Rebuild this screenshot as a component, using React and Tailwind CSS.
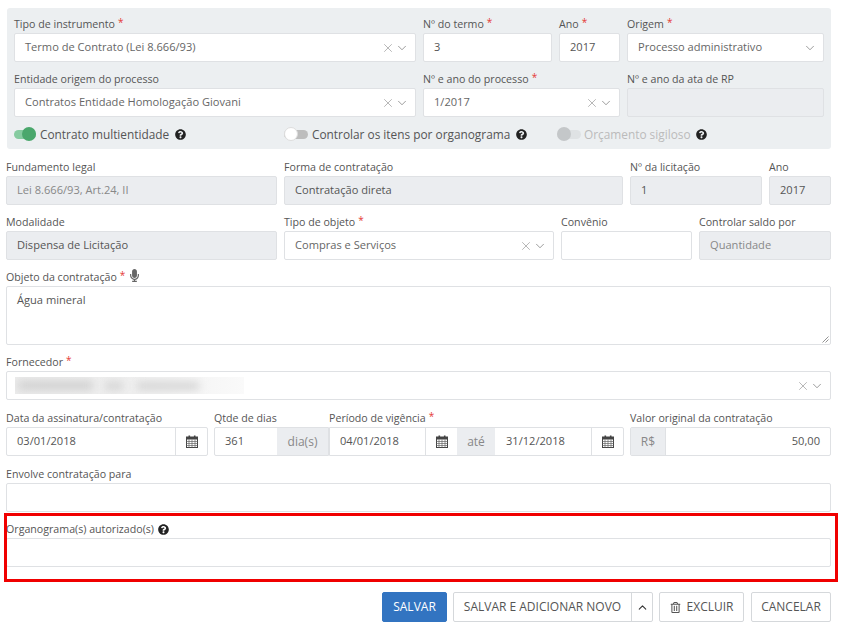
import React from 'react';
import { X, ChevronDown, ChevronUp } from 'lucide-react';
import { FaQuestionCircle, FaMicrophone, FaRegTrashAlt } from 'react-icons/fa';

const boxClass = 'h-[29px] border border-[#dfe1e4] rounded-[2px] flex items-center text-[11.1px] text-[#555]';

function Label({ text, required, children }) {
  return (
    <div className="h-[26px] pt-[10px] flex items-start text-[10.65px] leading-[15px] text-[#555] whitespace-nowrap">
      <span>{text}</span>
      {required && <span className="ml-[3px] text-[#e53935] text-[10px] leading-[11px]">*</span>}
      {children}
    </div>
  );
}

function Help({ className }) {
  return <FaQuestionCircle className={`text-[#222] ${className || ''}`} size={11} />;
}

function SelectIcons({ clear = true }) {
  return (
    <>
      {clear && <X size={14} strokeWidth={0.9} className="text-[#777]" />}
      <ChevronDown size={14} strokeWidth={1.1} className="text-[#666]" />
    </>
  );
}

function Select({ value, clear }) {
  return (
    <div className={`${boxClass} bg-white pl-[10px] pr-[6px]`}>
      <span className="flex-1 text-[#666] whitespace-nowrap">{value}</span>
      <SelectIcons clear={clear} />
    </div>
  );
}

function Input({ value, disabled, muted }) {
  return (
    <div className={`${boxClass} px-[10px] ${disabled ? 'bg-[#ebedf0] border-[#d6d8dc]' : 'bg-white'} ${muted ? 'text-[#888]' : ''}`}>
      {value}
    </div>
  );
}

function Addon({ text, className }) {
  return <div className={`h-full flex items-center justify-center bg-[#ebedf0] text-[12px] text-[#888] ${className}`}>{text}</div>;
}

function CalendarIcon() {
  return (
    <svg width="12" height="13" viewBox="0 0 12 13" fill="none">
      <rect x="0.5" y="2" width="11" height="10.5" fill="#fff" stroke="#444" />
      <rect x="0.5" y="2" width="11" height="2.5" fill="#444" />
      <rect x="2.5" y="0.5" width="1.6" height="3" fill="#444" />
      <rect x="7.9" y="0.5" width="1.6" height="3" fill="#444" />
      <path d="M0.5 6.5H11.5M0.5 8.5H11.5M0.5 10.5H11.5M3 4.5V12.5M6 4.5V12.5M9 4.5V12.5" stroke="#666" strokeWidth="0.7" />
    </svg>
  );
}

function CalendarBtn({ className }) {
  return (
    <div className={`h-full flex items-center justify-center border-l border-[#dfe1e4] ${className}`}>
      <CalendarIcon />
    </div>
  );
}

function Toggle({ on, disabled }) {
  if (on) {
    return (
      <span className="relative w-[22px] h-[9px] rounded-full bg-[#86cba0] block">
        <span className="absolute right-0 top-[-2.5px] w-[14px] h-[14px] rounded-full bg-[#4aa76c]" />
      </span>
    );
  }
  return (
    <span className={`relative w-[24px] h-[9px] rounded-full block ${disabled ? 'bg-[#dfe2e4]' : 'bg-[#bdbdbd]'}`}>
      <span className={`absolute left-0 top-[-2.5px] w-[14px] h-[14px] rounded-full ${disabled ? 'bg-[#c4c7c9]' : 'bg-white border border-[#ddd]'}`} />
    </span>
  );
}

function Button({ children, className }) {
  return (
    <div className={`h-[30px] flex items-center justify-center rounded-[2px] border text-[12px] ${className}`}>
      {children}
    </div>
  );
}

export default function App() {
  return (
    <div className="relative w-[843px] h-[627px] bg-white overflow-hidden" style={{ fontFamily: '"Open Sans", sans-serif' }}>
      <div className="w-[831px] pl-[6px] pt-[8px]">
        {/* painel superior */}
        <div className="ml-[1px] w-[824px] h-[141px] bg-[#eceff1] rounded-[3px] px-[7px] flex flex-col">
          <div className="flex gap-[7px] -mt-px">
            <div className="w-[402px]"><Label text="Tipo de instrumento" required /><Select value="Termo de Contrato (Lei 8.666/93)" /></div>
            <div className="w-[129px]"><Label text="Nº do termo" required /><Input value="3" /></div>
            <div className="w-[61px]"><Label text="Ano" required /><Input value="2017" /></div>
            <div className="w-[197px]"><Label text="Origem" required /><Select value="Processo administrativo" clear={false} /></div>
          </div>
          <div className="flex gap-[7px]">
            <div className="w-[402px]"><Label text="Entidade origem do processo" /><Select value="Contratos Entidade Homologação Giovani" /></div>
            <div className="w-[197px]"><Label text="Nº e ano do processo" required /><Select value="1/2017" /></div>
            <div className="w-[197px]"><Label text="Nº e ano da ata de RP" /><Input disabled value="" /></div>
          </div>
          <div className="flex items-center h-[33px] pt-[3px] text-[11.85px] text-[#555] whitespace-nowrap">
            <div className="w-[270px] flex items-center">
              <Toggle on />
              <span className="ml-[4px]">Contrato multientidade</span>
              <Help className="ml-[6px]" />
            </div>
            <div className="w-[273px] flex items-center">
              <Toggle />
              <span className="ml-[4px]">Controlar os itens por organograma</span>
              <Help className="ml-[6px]" />
            </div>
            <div className="flex items-center">
              <Toggle disabled />
              <span className="ml-[3px] text-[#bbb]">Orçamento sigiloso</span>
              <Help className="ml-[5px]" />
            </div>
          </div>
        </div>

        <div className="flex gap-[7px] mt-[1px]">
          <div className="w-[271px]"><Label text="Fundamento legal" /><Input disabled muted value="Lei 8.666/93, Art.24, II" /></div>
          <div className="w-[339px]"><Label text="Forma de contratação" /><Input disabled value="Contratação direta" /></div>
          <div className="w-[132px]"><Label text="Nº da licitação" /><Input disabled value="1" /></div>
          <div className="w-[62px]"><Label text="Ano" /><Input disabled value="2017" /></div>
        </div>

        <div className="flex gap-[7px]">
          <div className="w-[271px]"><Label text="Modalidade" /><Input disabled value="Dispensa de Licitação" /></div>
          <div className="w-[270px]"><Label text="Tipo de objeto" required /><Select value="Compras e Serviços" /></div>
          <div className="w-[131px]"><Label text="Convênio" /><Input value="" /></div>
          <div className="w-[132px]"><Label text="Controlar saldo por" /><Input disabled muted value="Quantidade" /></div>
        </div>

        <Label text="Objeto da contratação" required>
          <FaMicrophone size={13} className="ml-[3px] -mt-[1px] text-[#666]" />
        </Label>
        <div className="relative h-[59px] border border-[#dfe1e4] rounded-[2px] px-[10px] py-[5px] text-[11.1px] leading-[16px] text-[#555]">
          Água mineral
          <svg className="absolute right-[1px] bottom-[1px]" width="7" height="7" viewBox="0 0 7 7">
            <path d="M0.5 6.5 L6.5 0.5 M3.5 6.5 L6.5 3.5" stroke="#777" strokeWidth="0.8" />
          </svg>
        </div>

        <Label text="Fornecedor" required />
        <div className={`${boxClass} bg-white pl-[8px] pr-[6px]`}>
          <div className="flex-1 flex items-center">
            {/* nome do fornecedor borrado */}
            <div className="w-[229px] h-[17px] bg-gradient-to-r from-[#ececec] via-[#efefef] to-[#fafafa] overflow-hidden flex items-center">
              <div className="ml-[3px] w-[75px] h-[9px] bg-[#d0d0d0] blur-[4px]" />
              <div className="ml-[12px] w-[18px] h-[8px] bg-[#d4d4d4] blur-[4px]" />
              <div className="ml-[14px] w-[62px] h-[8px] bg-[#d4d4d4] blur-[4px]" />
            </div>
          </div>
          <SelectIcons />
        </div>

        <div className="flex mt-[1px]">
          <div className="w-[202px] mr-[6px]">
            <Label text="Data da assinatura/contratação" />
            <div className={`${boxClass} bg-white pl-[10px]`}>
              <span className="flex-1">03/01/2018</span>
              <CalendarBtn className="w-[32px]" />
            </div>
          </div>
          <div className="w-[115px]">
            <Label text="Qtde de dias" />
            <div className={`${boxClass} bg-white pl-[10px] rounded-r-none`}>
              <span className="flex-1">361</span>
              <Addon text="dia(s)" className="w-[51px]" />
            </div>
          </div>
          <div className="w-[295px] mr-[6px]">
            <Label text="Período de vigência" required />
            <div className={`${boxClass} bg-white pl-[10px] rounded-l-none`}>
              <span className="w-[85px]">04/01/2018</span>
              <CalendarBtn className="w-[32px]" />
              <Addon text="até" className="w-[38px]" />
              <span className="flex-1 pl-[11px]">31/12/2018</span>
              <CalendarBtn className="w-[32px]" />
            </div>
          </div>
          <div className="w-[201px]">
            <Label text="Valor original da contratação" />
            <div className={`${boxClass} bg-white pr-[10px]`}>
              <Addon text="R$" className="w-[35px] border-r border-[#dfe1e4]" />
              <span className="flex-1 text-right">50,00</span>
            </div>
          </div>
        </div>

        <div className="mt-[1px]"><Label text="Envolve contratação para" /></div>
        <Input value="" />

        <Label text="Organograma(s) autorizado(s)"><Help className="ml-[4px] mt-[2px]" /></Label>
        <Input value="" />

        <div className="flex justify-end gap-[6px] mt-[25px]">
          <Button className="w-[65px] bg-[#3274c1] border-[#3274c1] text-white">SALVAR</Button>
          <div className="w-[200px] h-[30px] flex rounded-[2px] border border-[#d5d8db] text-[12px] text-[#555]">
            <span className="flex-1 flex items-center justify-center">SALVAR E ADICIONAR NOVO</span>
            <span className="w-[21px] flex items-center justify-center border-l border-[#d5d8db]">
              <ChevronUp size={13} strokeWidth={2} className="text-[#333]" />
            </span>
          </div>
          <Button className="w-[85px] bg-white border-[#d5d8db] text-[#555]"><FaRegTrashAlt size={11} className="mr-[6px] text-[#555]" />EXCLUIR</Button>
          <Button className="w-[80px] ml-[1px] bg-white border-[#d5d8db] text-[#555]">CANCELAR</Button>
        </div>
      </div>

      {/* destaque vermelho sobre o campo */}
      <div className="absolute left-[4px] top-[513px] w-[834px] h-[69px] border-[3px] border-[#f00000] pointer-events-none" />
    </div>
  );
}
